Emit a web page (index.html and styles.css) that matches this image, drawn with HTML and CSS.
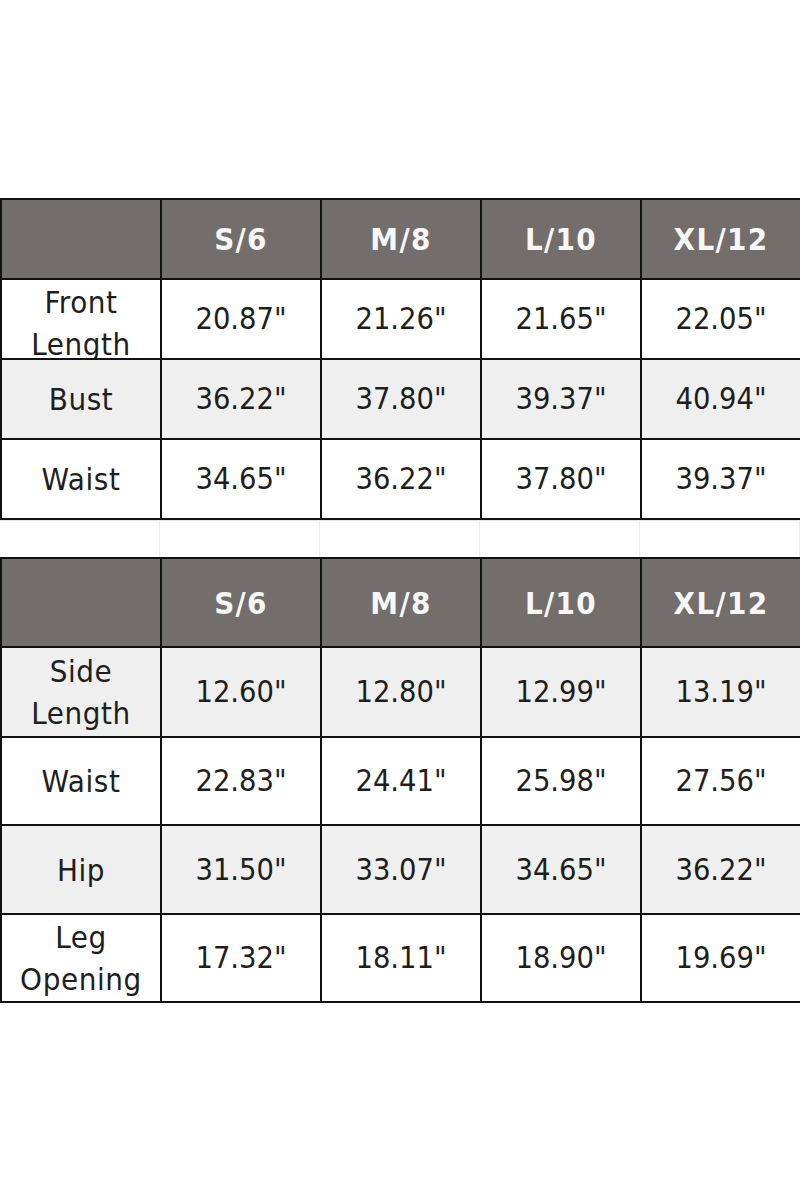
FILE: index.html
```html
<!DOCTYPE html>
<html>
<head>
<meta charset="utf-8">
<link rel="stylesheet" href="styles.css">
</head>
<body>
<div class="page">
  <div class="table t1">
    <div class="cell head"></div>
    <div class="cell head">S/6</div>
    <div class="cell head">M/8</div>
    <div class="cell head">L/10</div>
    <div class="cell head">XL/12</div>

    <div class="cell label low">Front<br>Length</div>
    <div class="cell">20.87"</div>
    <div class="cell">21.26"</div>
    <div class="cell">21.65"</div>
    <div class="cell">22.05"</div>

    <div class="cell label grey">Bust</div>
    <div class="cell grey">36.22"</div>
    <div class="cell grey">37.80"</div>
    <div class="cell grey">39.37"</div>
    <div class="cell grey">40.94"</div>

    <div class="cell label">Waist</div>
    <div class="cell">34.65"</div>
    <div class="cell">36.22"</div>
    <div class="cell">37.80"</div>
    <div class="cell">39.37"</div>
  </div>

  <div class="spacer">
    <div></div><div></div><div></div><div></div><div></div>
  </div>

  <div class="table t2">
    <div class="cell head"></div>
    <div class="cell head">S/6</div>
    <div class="cell head">M/8</div>
    <div class="cell head">L/10</div>
    <div class="cell head">XL/12</div>

    <div class="cell label grey">Side<br>Length</div>
    <div class="cell grey">12.60"</div>
    <div class="cell grey">12.80"</div>
    <div class="cell grey">12.99"</div>
    <div class="cell grey">13.19"</div>

    <div class="cell label">Waist</div>
    <div class="cell">22.83"</div>
    <div class="cell">24.41"</div>
    <div class="cell">25.98"</div>
    <div class="cell">27.56"</div>

    <div class="cell label grey">Hip</div>
    <div class="cell grey">31.50"</div>
    <div class="cell grey">33.07"</div>
    <div class="cell grey">34.65"</div>
    <div class="cell grey">36.22"</div>

    <div class="cell label">Leg<br>Opening</div>
    <div class="cell">17.32"</div>
    <div class="cell">18.11"</div>
    <div class="cell">18.90"</div>
    <div class="cell">19.69"</div>
  </div>
</div>
</body>
</html>
```
FILE: styles.css
```css
html, body {
  margin: 0;
  padding: 0;
  background: #ffffff;
}

.page {
  padding-top: 198px;
  width: 800px;
  font-family: "DejaVu Sans Condensed", "DejaVu Sans", sans-serif;
}

.table {
  display: grid;
  grid-template-columns: 158px 158px 158px 158px 158px;
  gap: 2px;
  padding: 2px 0 2px 2px;
  background: #111111;
  width: 800px;
  box-sizing: border-box;
}

.t1 {
  grid-template-rows: 78px 78px 78px 78px;
}

.t2 {
  grid-template-rows: 87px 88px 86px 87px 86px;
}

.cell {
  background: #ffffff;
  color: #1e1e1e;
  font-size: 30.5px;
  line-height: 42px;
  display: flex;
  align-items: center;
  justify-content: center;
  text-align: center;
  overflow: hidden;
}

.cell.grey {
  background: #efefef;
}

.cell.head {
  background: #736d6b;
  color: #f7f7f7;
  font-weight: bold;
  font-size: 31px;
  letter-spacing: 1.3px;
}

.cell.label {
  font-size: 31px;
  line-height: 42px;
  letter-spacing: 0.6px;
}

.cell.low {
  align-items: flex-start;
  padding-top: 1px;
}

.spacer {
  display: grid;
  grid-template-columns: 160px 160px 160px 160px 160px;
  height: 36px;
  border-top: 1px solid #e4e4e4;
}

.spacer div {
  border-right: 1px solid #ececec;
}
```
